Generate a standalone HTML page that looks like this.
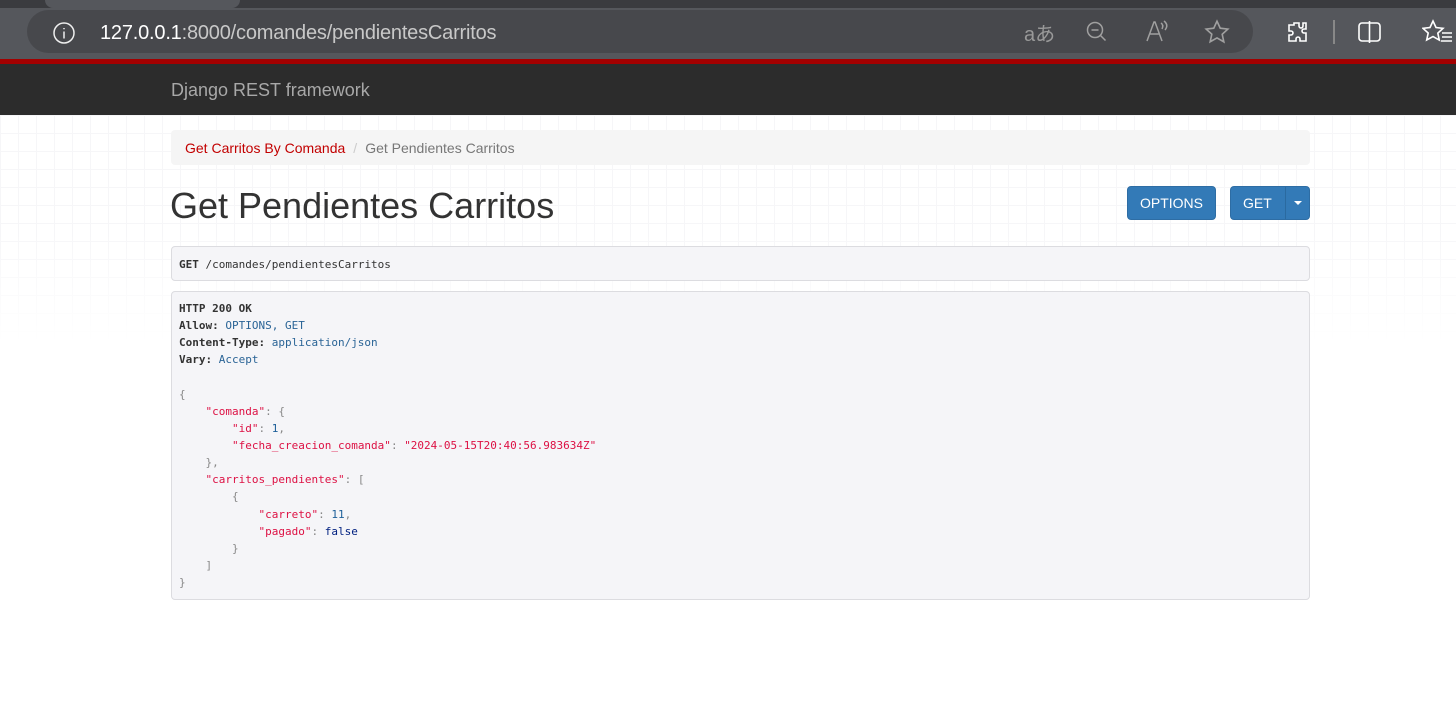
<!DOCTYPE html>
<html><head><meta charset="utf-8"><style>
*{margin:0;padding:0;box-sizing:border-box}
body{width:1456px;height:726px;overflow:hidden;background:#fff;font-family:"Liberation Sans",sans-serif;position:relative}
.tabs{position:absolute;left:0;top:0;width:1456px;height:8px;background:#3a3b3f}
.tabs .t{position:absolute;left:45px;top:0;width:195px;height:8px;background:#55575c;border-radius:0 0 8px 8px}
.toolbar{position:absolute;left:0;top:3px;width:1456px;height:56px;background:#55575c}
.pill{position:absolute;left:27px;top:10px;width:1226px;height:43px;background:#47484c;border-radius:22px}
.url{position:absolute;left:100px;top:22px;font-size:20px;color:#c8c8c8;letter-spacing:-0.2px}
.url b{font-weight:normal;color:#fff}
.red{position:absolute;left:0;top:59px;width:1456px;height:5px;background:#a30000}
.nav{position:absolute;left:0;top:64px;width:1456px;height:51px;background:#2c2c2c}
.brand{position:absolute;left:171px;top:80px;font-size:18px;color:#a8a8a8}
.grid{position:absolute;left:0;top:115px;width:1456px;height:230px;background-image:linear-gradient(#f6f6f8 1px,transparent 1px),linear-gradient(90deg,#f6f6f8 1px,transparent 1px);background-size:18px 18px;-webkit-mask-image:linear-gradient(#000 50%,transparent);mask-image:linear-gradient(#000 50%,transparent)}
.bc{position:absolute;left:171px;top:130px;width:1139px;height:35px;background:#f5f5f5;border-radius:4px;font-size:14px;padding:10px 14px;color:#777}
.bc a{color:#c20000}
.bc span{color:#ccc;padding:0 8px}
h1{position:absolute;left:170px;top:185px;font-size:36px;font-weight:normal;color:#333}
.btn{position:absolute;top:186px;height:34px;background:#337ab7;border:1px solid #2e6da4;border-radius:4px;color:#fff;font-size:14px;text-align:center;line-height:32px}
.box{position:absolute;left:171px;width:1139px;background:#f5f5f8;border:1px solid #dcdce0;border-radius:4px;font-family:"DejaVu Sans Mono","Liberation Mono",monospace;font-size:11px;color:#333}
pre{font-family:inherit;font-size:11px;line-height:17.13px}
.k{color:#333;font-weight:bold}.v{color:#2a6496}.s{color:#dd1144}.p{color:#888}.n{color:#1d5f99}.l{color:#002080}
</style></head><body>
<div class="toolbar"></div>
<div class="tabs"><div class="t"></div></div>
<div class="pill"></div>
<svg style="position:absolute;left:52px;top:21px" width="24" height="24" viewBox="0 0 24 24" fill="none" stroke="#eee" stroke-width="1.5"><circle cx="12" cy="12" r="10"/><path d="M12 10.5v7M12 7v1.2"/></svg>
<div class="url"><b>127.0.0.1</b>:8000/comandes/pendientesCarritos</div>
<div style="position:absolute;left:1024px;top:18px;font-size:20px;color:#999;font-family:'Liberation Sans','Noto Sans CJK JP',sans-serif">aあ</div>
<svg style="position:absolute;left:1085px;top:20px" width="24" height="24" viewBox="0 0 24 24" fill="none" stroke="#a0a0a0" stroke-width="1.5"><circle cx="10" cy="10" r="7.5"/><path d="M6.5 10h7M15.5 15.5l5 5"/></svg>
<svg style="position:absolute;left:1145px;top:19px" width="26" height="24" viewBox="0 0 26 24" fill="none" stroke="#a0a0a0" stroke-width="1.5"><path d="M2 22L9 3h1l7 19M5 15h10M16 4q3 2 1 6M19 2q5 4 1 9"/></svg>
<svg style="position:absolute;left:1204px;top:19px" width="26" height="26" viewBox="0 0 24 24" fill="none" stroke="#a0a0a0" stroke-width="1.5"><path d="M12 2l3 6.5 7 .8-5.2 4.8 1.5 7L12 17.5 5.7 21l1.5-7L2 9.3l7-.8z"/></svg>
<svg style="position:absolute;left:1285px;top:20px" width="24" height="24" viewBox="0 0 24 24" fill="none" stroke="#fff" stroke-width="1.6"><path d="M9 3h5v3a2 2 0 104 0V3h-0 3v6h-2a2 2 0 100 4h2v8h-6v-2a2 2 0 10-4 0v2H4v-6h2a2 2 0 100-4H4V5h5z"/></svg>
<div style="position:absolute;left:1333px;top:20px;width:2px;height:24px;background:#888"></div>
<svg style="position:absolute;left:1357px;top:20px" width="26" height="24" viewBox="0 0 26 24" fill="none" stroke="#fff" stroke-width="1.6"><rect x="2" y="3" width="21" height="18" rx="3"/><path d="M12.5 1v22"/></svg>
<svg style="position:absolute;left:1422px;top:19px" width="30" height="26" viewBox="0 0 30 26" fill="none" stroke="#fff" stroke-width="1.6"><path d="M11 2l3 6.5 7 .8-5.2 4.8 1.5 7L11 17.5 4.7 21l1.5-7L1 9.3l7-.8zM20 14h10M20 18h10M19 22h11"/></svg>
<div class="red"></div>
<div class="nav"></div>
<div class="brand">Django REST framework</div>
<div class="grid"></div>
<div class="bc"><a>Get Carritos By Comanda</a><span>/</span>Get Pendientes Carritos</div>
<h1>Get Pendientes Carritos</h1>
<div class="btn" style="left:1127px;width:89px">OPTIONS</div>
<div class="btn" style="left:1230px;width:80px;text-align:left;padding-left:12px">GET<div style="position:absolute;left:54px;top:0;width:1px;height:32px;background:#2a6aa0"></div><div style="position:absolute;left:63px;top:14px;border:4px solid transparent;border-top-color:#fff;border-bottom:0"></div></div>
<div class="box" style="top:246px;height:35px;padding:9px 7px"><pre><span class="k">GET</span> /comandes/pendientesCarritos</pre></div>
<div class="box" style="top:291px;height:309px;padding:8px 7px"><pre><span class="k">HTTP 200 OK</span>
<span class="k">Allow:</span> <span class="v">OPTIONS, GET</span>
<span class="k">Content-Type:</span> <span class="v">application/json</span>
<span class="k">Vary:</span> <span class="v">Accept</span>

<span class="p">{</span>
    <span class="s">"comanda"</span><span class="p">: {</span>
        <span class="s">"id"</span><span class="p">:</span> <span class="n">1</span><span class="p">,</span>
        <span class="s">"fecha_creacion_comanda"</span><span class="p">:</span> <span class="s">"2024-05-15T20:40:56.983634Z"</span>
    <span class="p">},</span>
    <span class="s">"carritos_pendientes"</span><span class="p">: [</span>
        <span class="p">{</span>
            <span class="s">"carreto"</span><span class="p">:</span> <span class="n">11</span><span class="p">,</span>
            <span class="s">"pagado"</span><span class="p">:</span> <span class="l">false</span>
        <span class="p">}</span>
    <span class="p">]</span>
<span class="p">}</span></pre></div>
</body></html>
